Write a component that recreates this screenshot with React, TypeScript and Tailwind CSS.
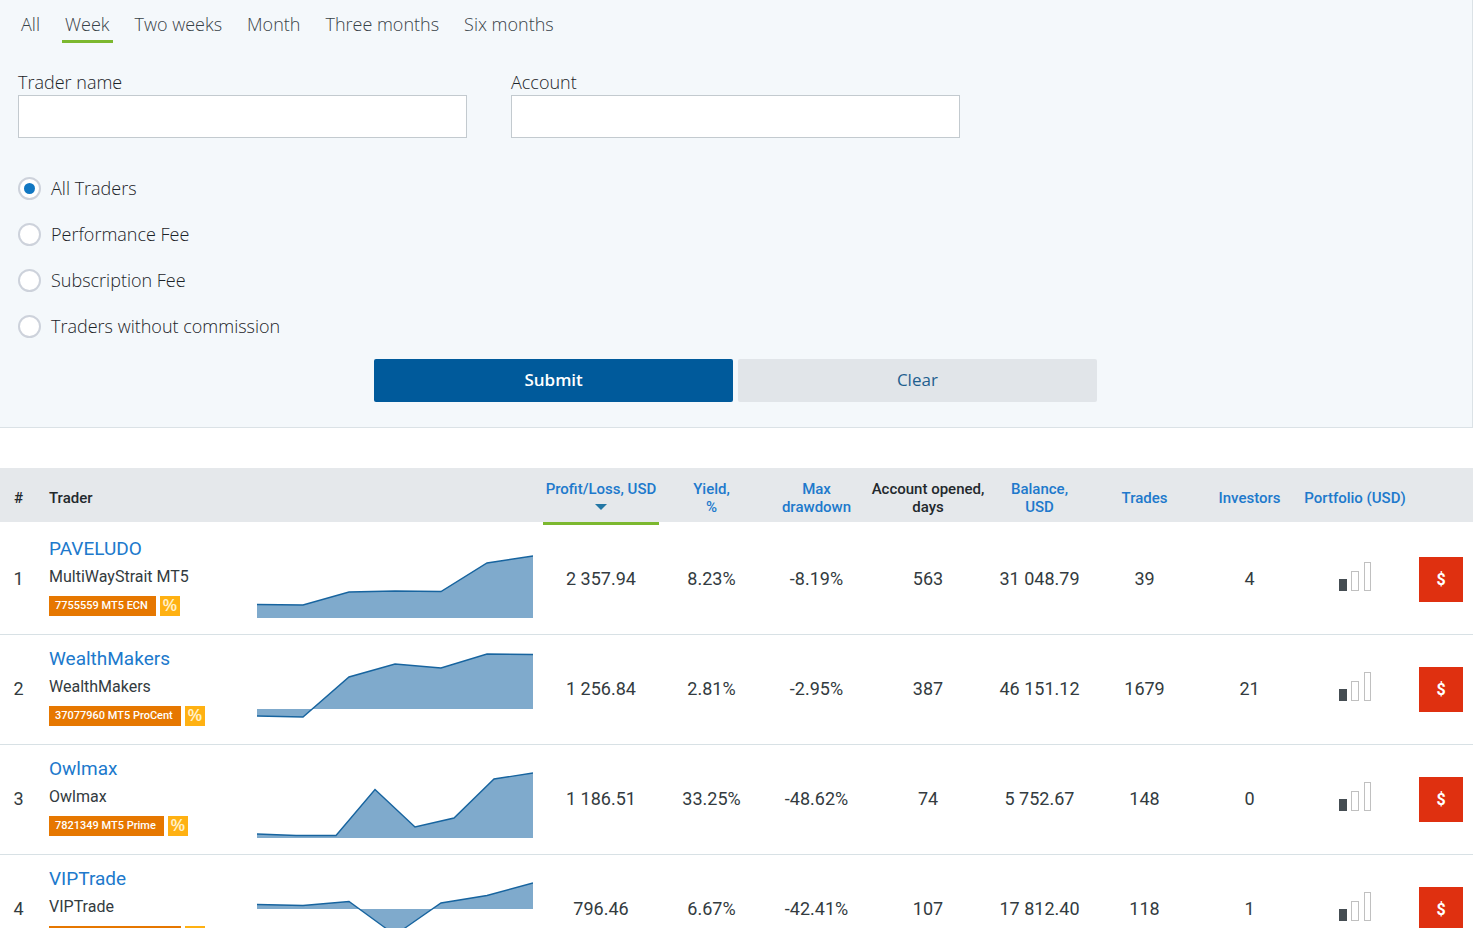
import React, { useState } from "react";

interface Trader {
  name: string;
  account: string;
  badge: string;
  /** Profit, yield, drawdown, days, balance, trades, investors. */
  stats: string[];
  /** Chart points in a 276x79 box. */
  points: [number, number][];
  /** Y of the zero line the area is filled down (or up) to. */
  base: number;
}

const traders: Trader[] = [
  {
    name: "PAVELUDO", account: "MultiWayStrait MT5", badge: "7755559 MT5 ECN",
    stats: ["2 357.94", "8.23%", "-8.19%", "563", "31 048.79", "39", "4"],
    points: [[0, 64.5], [46, 65], [92, 52], [138, 51], [184, 51.5], [230, 23], [276, 16]],
    base: 78,
  },
  {
    name: "WealthMakers", account: "WealthMakers", badge: "37077960 MT5 ProCent",
    stats: ["1 256.84", "2.81%", "-2.95%", "387", "46 151.12", "1679", "21"],
    points: [[0, 66], [46, 67], [92, 27], [138, 14], [184, 18], [230, 4], [276, 4.5]],
    base: 59,
  },
  {
    name: "Owlmax", account: "Owlmax", badge: "7821349 MT5 Prime",
    stats: ["1 186.51", "33.25%", "-48.62%", "74", "5 752.67", "148", "0"],
    points: [[0, 74], [39, 75.5], [79, 75.5], [118, 29.5], [158, 67], [197, 58], [237, 19], [276, 13]],
    base: 78,
  },
  {
    name: "VIPTrade", account: "VIPTrade", badge: "37078114 MT5 ProCent",
    stats: ["796.46", "6.67%", "-42.41%", "107", "17 812.40", "118", "1"],
    points: [[0, 34.5], [46, 35.5], [92, 31.5], [138, 65], [184, 33], [230, 25.5], [276, 13]],
    base: 39,
  },
];

const periods = ["All", "Week", "Two weeks", "Month", "Three months", "Six months"];
const feeTypes = ["All Traders", "Performance Fee", "Subscription Fee", "Traders without commission"];

function Chart({ points, base }: { points: [number, number][]; base: number }) {
  const line = points.map((p) => p.join(",")).join(" ");
  return (
    <svg viewBox="0 0 276 79" preserveAspectRatio="none" className="block h-[79px] w-full">
      <polygon points={`0,${base} ${line} 276,${base}`} fill="#7faacc" />
      <polyline points={line} fill="none" stroke="#17649f" strokeWidth="1.4" />
    </svg>
  );
}

function RiskBars() {
  return (
    <svg viewBox="0 0 34 35" className="mx-auto block h-[35px] w-[34px]">
      <rect x="1" y="17" width="8" height="12" fill="#454d52" />
      <rect x="13.5" y="9.5" width="7" height="19" fill="#fff" stroke="#c0c0c0" />
      <rect x="26.5" y="0.5" width="6" height="28" fill="#fff" stroke="#c0c0c0" />
    </svg>
  );
}

function SortButton({ children }: { children: React.ReactNode }) {
  return (
    <button type="button" className="cursor-pointer font-medium text-[#2079cc] hover:underline">
      {children}
    </button>
  );
}

function FilterForm() {
  const [period, setPeriod] = useState("Week");
  const [fee, setFee] = useState("All Traders");

  return (
    <form
      onSubmit={(e) => e.preventDefault()}
      className="border-r border-b border-[#dbe2e6] bg-[#f4f8fb] pt-3 pr-[19px] pb-[25px] pl-[18px] font-['Open_Sans',sans-serif] text-lg font-light text-[#1b2328]"
    >
      <div className="flex gap-[19px]">
        {periods.map((p) => (
          <button
            key={p}
            type="button"
            onClick={() => setPeriod(p)}
            className={
              "cursor-pointer border-b-3 px-[3px] pb-1 leading-6 text-[#384248] " +
              (p === period ? "border-[#7cb82f]" : "border-transparent")
            }
          >
            {p}
          </button>
        ))}
      </div>

      <div className="mt-[27px] grid grid-cols-3 gap-x-11">
        <div>
          <label htmlFor="trader-name" className="block pb-px leading-6">Trader name</label>
          <input id="trader-name" className="block h-[43px] w-full border border-[#c3cacf] bg-white px-3 outline-none" />
        </div>
        <div>
          <label htmlFor="account" className="block pb-px leading-6">Account</label>
          <input id="account" className="block h-[43px] w-full border border-[#c3cacf] bg-white px-3 outline-none" />
        </div>
      </div>

      <div className="mt-[27px] flex flex-col items-start">
        {feeTypes.map((f) => (
          <label key={f} className="flex h-[46px] cursor-pointer items-center gap-2.5">
            <input
              type="radio"
              name="fee"
              checked={f === fee}
              onChange={() => setFee(f)}
              className="grid h-[23px] w-[23px] appearance-none place-content-center rounded-full border-2 border-[#cdd2db] bg-white before:h-[11px] before:w-[11px] before:rounded-full checked:before:bg-[#1177c2]"
            />
            {f}
          </label>
        ))}
      </div>

      <div className="mt-2.5 flex justify-center gap-[5px] text-[17px]">
        <button type="submit" className="h-[43px] w-1/4 cursor-pointer rounded-xs bg-[#005a9b] font-semibold text-white">
          Submit
        </button>
        <button type="reset" className="h-[43px] w-1/4 cursor-pointer rounded-xs bg-[#e1e5e9] font-medium text-[#1f5f8f]">
          Clear
        </button>
      </div>
    </form>
  );
}

export default function App() {
  return (
    <main className="mr-px bg-white">
      <FilterForm />

      <table className="mt-10 w-full table-fixed border-separate border-spacing-0 text-center font-[Roboto,sans-serif] text-lg text-[#333b40]">
        <colgroup>
          <col className="w-[37px]" />
          <col className="w-[208px]" />
          <col />
          <col className="w-[116px]" />
          <col className="w-[105px]" />
          <col className="w-[105px]" />
          <col className="w-[118px]" />
          <col className="w-[105px]" />
          <col className="w-[105px]" />
          <col className="w-[105px]" />
          <col className="w-[106px]" />
          <col className="w-[65px]" />
        </colgroup>
        <thead className="bg-[#e5e8eb] text-[15px] leading-[18px] text-[#23292d]">
          <tr className="h-[54px] *:pt-1.5">
            <th className="font-medium">#</th>
            <th className="pl-3 text-left font-medium">Trader</th>
            <th />
            <th>
              <SortButton>
                Profit/Loss, USD
                <span className="flex h-[18px] items-center justify-center">
                  <svg viewBox="0 0 12 6" className="h-[6px] w-[12px]">
                    <path d="M0 0h12L6 6z" fill="#2377a5" />
                  </svg>
                </span>
              </SortButton>
            </th>
            <th><SortButton>Yield,<br />%</SortButton></th>
            <th><SortButton>Max<br />drawdown</SortButton></th>
            <th className="font-medium">Account opened,<br />days</th>
            <th><SortButton>Balance,<br />USD</SortButton></th>
            <th><SortButton>Trades</SortButton></th>
            <th><SortButton>Investors</SortButton></th>
            <th className="whitespace-nowrap"><SortButton>Portfolio (USD)</SortButton></th>
            <th />
          </tr>
          {/* marks the active sort column */}
          <tr className="h-[3px] bg-white">
            <td colSpan={3} />
            <td className="bg-[#7cb82f]" />
            <td colSpan={8} />
          </tr>
        </thead>
        <tbody>
          {traders.map((t, i) => (
            <tr key={t.name} className="h-[110px] *:border-b *:border-[#d8e1e5]">
              <td className="pb-0.5">{i + 1}</td>
              <td className="pt-3 pl-3 text-left align-top">
                <a href="#" className="block text-[19px] leading-6 text-[#2079cc]">{t.name}</a>
                <div className="mt-1 text-base leading-6">{t.account}</div>
                <div className="mt-[7px] flex gap-1 text-[11px] leading-5 font-medium text-white">
                  <span className="bg-[#e67700] pr-2 pl-1.5">{t.badge}</span>
                  <span className="flex w-5 justify-center bg-[#ffb112] font-['Liberation_Sans',sans-serif] text-base leading-5 font-bold text-[#fff0c8]">%</span>
                </div>
              </td>
              <td className="pr-2.5 pl-3"><Chart points={t.points} base={t.base} /></td>
              {t.stats.map((value, n) => (
                <td key={n} className="pb-0.5">{value}</td>
              ))}
              <td><RiskBars /></td>
              <td className="pr-2.5">
                <button type="button" className="ml-auto block h-[45px] w-11 cursor-pointer bg-[#df3010] text-base font-bold text-white">
                  $
                </button>
              </td>
            </tr>
          ))}
        </tbody>
      </table>
    </main>
  );
}
